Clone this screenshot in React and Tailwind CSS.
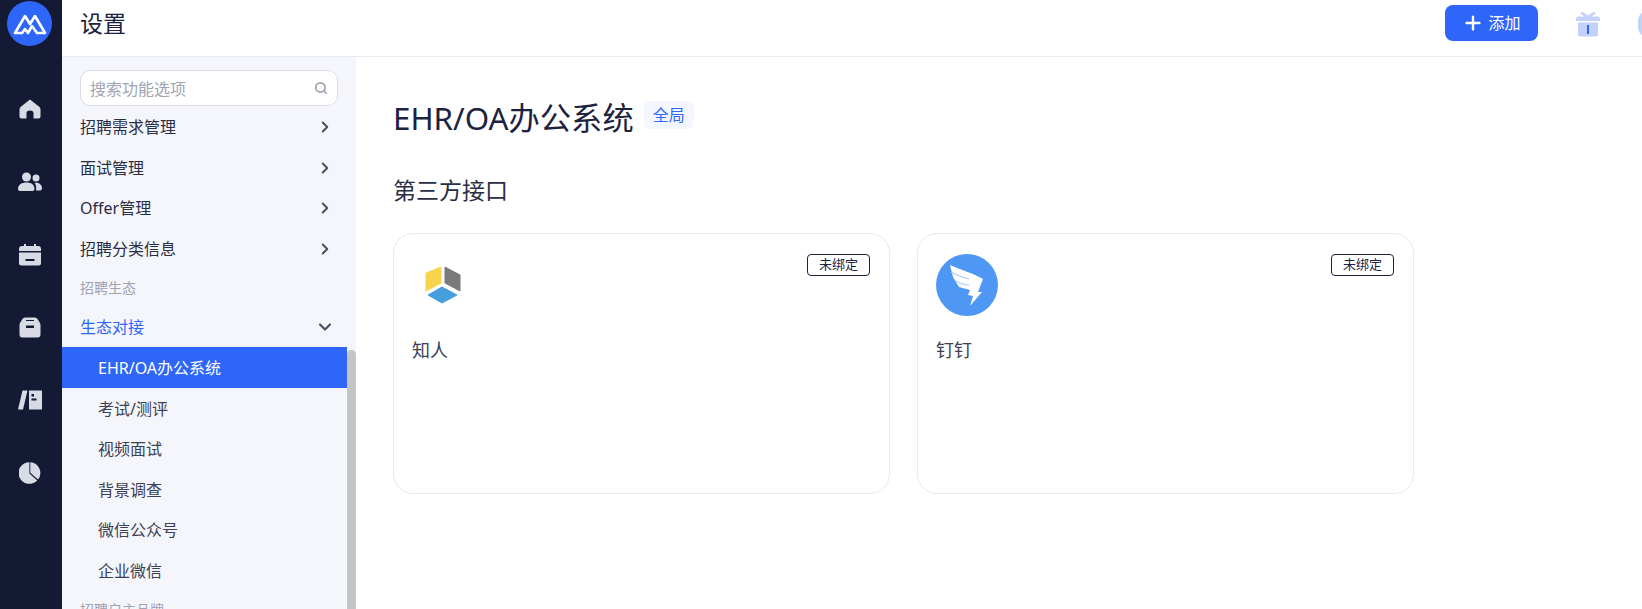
import React from 'react'
import { ChevronRight, ChevronDown, Search, Plus } from 'lucide-react'

const FONT = 'font-["Noto_Sans","Noto_Sans_CJK_SC",sans-serif]'

const Logo = () => (
  <div className="w-[45px] h-[45px] rounded-full bg-[#2e66fa] flex items-center justify-center mt-px">
    <svg width="34" height="22" viewBox="0 0 34 22" fill="none" stroke="#fff" strokeWidth="2.6" strokeLinejoin="round">
      <path d="M2 20 L12 3 L17 11 L22 3 L32 20 L24 20 L19 13 L15 20 L12 16 L9 20 Z" />
    </svg>
  </div>
)

const HomeIcon = () => (
  <svg width="22" height="20" viewBox="0 0 22 20" fill="#d8dbe6">
    <path d="M11 0.5 L20.5 8 Q21.5 9 21.5 10.5 V17.5 Q21.5 19.5 19.5 19.5 H14.5 V14 Q14.5 11.5 11 11.5 Q7.5 11.5 7.5 14 V19.5 H2.5 Q0.5 19.5 0.5 17.5 V10.5 Q0.5 9 1.5 8 Z" />
  </svg>
)

const PeopleIcon = () => (
  <svg width="24" height="20" viewBox="0 0 24 20" fill="#d8dbe6">
    <circle cx="8.5" cy="5" r="4.5" />
    <path d="M0 17 C0 12.5 4 10.5 8.5 10.5 C13 10.5 16.5 12.5 16.5 17 Q16.5 19 14.5 19 H2 Q0 19 0 17 Z" />
    <circle cx="18" cy="6" r="3.5" />
    <path d="M16.5 10.8 C20 10 24 12 24 16 Q24 18.5 22 18.5 H18 C18.5 15 18 12.5 16.5 10.8 Z" />
  </svg>
)

const CalendarIcon = () => (
  <svg width="22" height="22" viewBox="0 0 22 22" fill="#d8dbe6">
    <path d="M5 0 H7 V2 H15 V0 H17 V2 H19 Q22 2 22 5 V7 H0 V5 Q0 2 3 2 H5 Z" />
    <path fillRule="evenodd" d="M0 8.5 H22 V19 Q22 21.5 19.5 21.5 H2.5 Q0 21.5 0 19 Z M6.5 15 V17 H15.5 V15 Z" />
  </svg>
)

const BoxIcon = () => (
  <svg width="22" height="21" viewBox="0 0 22 21" fill="#d8dbe6">
    <path fillRule="evenodd" d="M6 0.5 H16 Q17.5 0.5 18.5 2 L21 6 Q21.5 7 21.5 8 V17.5 Q21.5 20.5 18.5 20.5 H3.5 Q0.5 20.5 0.5 17.5 V8 Q0.5 7 1 6 L3.5 2 Q4.5 0.5 6 0.5 Z M7 8.5 V11 H15 V8.5 Z M7 3 V4 H15 V3 Z" />
  </svg>
)

const BookIcon = () => (
  <svg width="24" height="20" viewBox="0 0 24 20" fill="#d8dbe6">
    <path d="M4.5 0.5 H9.5 L5 19.5 H0 Z" />
    <path fillRule="evenodd" d="M11 0.5 H24 V19.5 H11 Z M13.5 4 V6.5 H16 V4 Z M13.5 8.5 V10.5 H18.5 V8.5 Z" />
  </svg>
)

const PieIcon = () => (
  <svg width="22" height="22" viewBox="0 0 22 22" fill="#d8dbe6">
    <path d="M10.4 0.2 V11.4 L18.2 18.4 A10.8 10.8 0 1 1 10.4 0.2 Z" />
    <path d="M11.3 0.2 A10.8 10.8 0 0 1 19 17.6 L11.3 10.8 Z" />
  </svg>
)

const GiftIcon = () => (
  <svg width="24" height="26" viewBox="0 0 24 26">
    <path d="M6 0.5 L12 4.5 L18 0.5 L19.5 2.5 L15.5 5.5 H21.5 Q24 5.5 24 8 V10 H0 V8 Q0 5.5 2.5 5.5 H8.5 L4.5 2.5 Z" fill="#c2d2fb" />
    <path d="M2 11.5 H22 V23 Q22 25.5 19.5 25.5 H4.5 Q2 25.5 2 23 Z" fill="#c2d2fb" />
    <rect x="11" y="14" width="2" height="9" fill="#2e66fa" />
  </svg>
)

const ZhirenLogo = () => (
  <svg width="60" height="60" viewBox="0 0 60 60">
    <path d="M14 19 L29 13 V29 L14 37 Z" fill="#f8d44c" stroke="#f8d44c" strokeLinejoin="round" />
    <path d="M33 13 L48 21 V37 L33 29 Z" fill="#7a7a7a" stroke="#7a7a7a" strokeLinejoin="round" />
    <path d="M30 33 L45 41 L30 49 L16 41 Z" fill="#459fdd" stroke="#459fdd" strokeLinejoin="round" />
  </svg>
)

const DingtalkLogo = () => (
  <svg width="62" height="62" viewBox="0 0 62 62">
    <circle cx="31" cy="31" r="31" fill="#4f97f5" />
    <path d="M14 11 C25 16 37 19 47 25 L42 38 H46 L34 52 L37 42 L32 41 L34 36 L23 33 L17 23 Z" fill="#fff" />
    <path d="M15 18 C22 22 28 24 33 25 M20 27 C25 30 29 31 33 31" fill="none" stroke="#a9ccfa" strokeWidth="1.2" />
  </svg>
)

const navIcons = [HomeIcon, PeopleIcon, CalendarIcon, BoxIcon, BookIcon, PieIcon]

const MenuRow = ({ label }) => (
  <div className="h-[40.6px] flex items-center justify-between pl-[18px] pr-[13px] text-base text-[#2a2e45]">
    <span>{label}</span>
    <ChevronRight size={18} strokeWidth={2.6} className="text-[#4a4e63]" />
  </div>
)

const SubRow = ({ label, active }) => (
  <div
    className={
      active
        ? 'h-[41px] flex items-center pl-[36px] text-base bg-[#2e66fa] text-white'
        : 'h-[40.6px] flex items-center pl-[36px] text-base text-[#3d4156]'
    }
  >
    {label}
  </div>
)

const IntegrationCard = ({ name, logo }) => (
  <div className="w-[497px] h-[261px] rounded-[20px] border border-[#e8e8f2] bg-white pt-5 pl-[18px] pr-[19px]">
    <div className="flex items-start justify-between h-[62px]">
      {logo}
      <span className="w-[63px] h-[22px] flex items-center justify-center rounded border border-[#1c2240] text-[13px] text-[#1c2240]">
        未绑定
      </span>
    </div>
    <div className="mt-[21px] text-lg leading-[26px] text-[#3d4156]">{name}</div>
  </div>
)

const Watermark = () => (
  <div className="absolute top-0 left-[62px] right-0 bottom-0 overflow-hidden pointer-events-none">
    <div className="grid grid-cols-[repeat(8,233px)] auto-rows-[113px] -ml-[35px] -mt-[45px]">
      {Array.from({ length: 56 }).map((_, i) => (
        <div key={i} className="flex items-center justify-center">
          <div className="-rotate-[32deg] text-center whitespace-nowrap text-base leading-5 text-[#000000]/[0.018]">
            <div>盼盼 2023-03-15 15:06</div>
            <div>lipanpan</div>
          </div>
        </div>
      ))}
    </div>
  </div>
)

export default function App() {
  return (
    <div className={`relative flex h-screen overflow-hidden bg-white ${FONT}`}>
      <aside className="w-[62px] shrink-0 bg-[#141a33] flex flex-col items-center pr-[3px]">
        <Logo />
        <div className="mt-[27px] flex flex-col items-center">
          {navIcons.map((Icon, i) => (
            <div key={i} className="h-[72.7px] flex items-center justify-center">
              <Icon />
            </div>
          ))}
        </div>
      </aside>

      <div className="flex-1 flex flex-col min-w-0">
        <header className="h-[57px] shrink-0 border-b border-[#e8e8f2] flex items-center pl-[18px] pb-[10px] relative">
          <h1 className="text-[23px] text-[#1c2240]">设置</h1>
          <div className="ml-auto flex items-center">
            <button className="w-[93px] h-9 rounded-lg bg-[#2e66fa] text-white text-base flex items-center justify-center gap-1">
              <Plus size={22} strokeWidth={2.6} />
              添加
            </button>
            <div className="ml-[38px] mr-[42px] mt-[1px]">
              <GiftIcon />
            </div>
            <div className="absolute -right-[18px] top-[10px] w-[22px] h-[28px] rounded-full bg-[#c2d2fb]" />
          </div>
        </header>

        <div className="flex-1 flex min-h-0">
          <nav className="relative w-[294px] shrink-0 bg-[#f4f6fc] overflow-hidden">
            <div className="w-[285px]">
              <div className="pt-[13px] pl-[18px] pr-[9px]">
                <div className="h-9 rounded-[10px] border border-[#dcdde8] bg-white flex items-center justify-between pl-[9px] pr-[9px] text-base text-[#a0a3b1]">
                  <span className="mt-0.5">搜索功能选项</span>
                  <Search size={14} strokeWidth={3} className="text-[#a0a3b1]" />
                </div>
              </div>
              <div className="mt-px">
                <MenuRow label="招聘需求管理" />
                <MenuRow label="面试管理" />
                <MenuRow label="Offer管理" />
                <MenuRow label="招聘分类信息" />
                <div className="h-[38px] flex items-center pl-[18px] text-sm text-[#a0a3b1]">招聘生态</div>
                <div className="h-[40px] flex items-center justify-between pl-[18px] pr-[12px] text-base text-[#2e66fa]">
                  <span>生态对接</span>
                  <ChevronDown size={20} strokeWidth={2.6} className="text-[#4a4e63]" />
                </div>
                <SubRow label="EHR/OA办公系统" active />
                <SubRow label="考试/测评" />
                <SubRow label="视频面试" />
                <SubRow label="背景调查" />
                <SubRow label="微信公众号" />
                <SubRow label="企业微信" />
                <div className="h-[38px] flex items-center pl-[18px] text-sm text-[#a0a3b1]">招聘自主品牌</div>
              </div>
            </div>
            <div className="absolute right-0 top-[293px] bottom-0 w-[9px] rounded-t-md bg-[#c3c4c8]" />
          </nav>

          <main className="flex-1 pl-[37px] pt-[39px] min-w-0">
            <div className="flex items-center gap-[10px] h-[44px]">
              <h2 className="text-[31.3px] leading-[44px] text-[#1c2240]">EHR/OA办公系统</h2>
              <span className="h-[28px] -mt-[6px] px-[9px] flex items-center rounded-md bg-[#f4f7fe] text-base text-[#2e66fa]">全局</span>
            </div>
            <h3 className="mt-[34px] text-[23px] leading-8 text-[#2a2e45]">第三方接口</h3>
            <div className="mt-[27px] flex gap-[27px]">
              <IntegrationCard name="知人" logo={<ZhirenLogo />} />
              <IntegrationCard name="钉钉" logo={<DingtalkLogo />} />
            </div>
          </main>
        </div>
      </div>

      <Watermark />
    </div>
  )
}
